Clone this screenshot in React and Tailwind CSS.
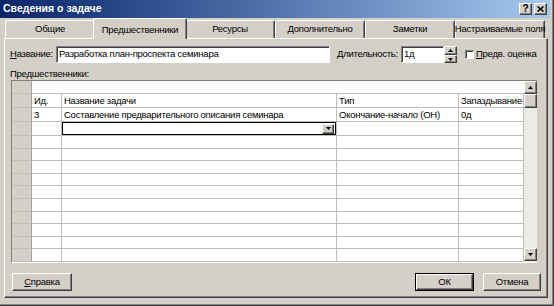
import React from 'react';

const raised = 'border-t border-l border-white border-r border-b border-r-[#404040] border-b-[#404040] shadow-[inset_-1px_-1px_0_#808080] bg-[#d4d0c8]';
const sunken = 'border-t border-l border-[#808080] border-r border-b border-r-white border-b-white shadow-[inset_1px_1px_0_#404040] bg-white';

const Tri = ({ up }) => (
  <svg width="5" height="3" viewBox="0 0 5 3">
    <path d={up ? 'M2.5 0 L5 3 L0 3 Z' : 'M0 0 L5 0 L2.5 3 Z'} fill="#000" />
  </svg>
);

function Tab({ label, active }) {
  if (active) {
    return (
      <div className="relative z-10 -mx-[2px] -mb-[1px] flex h-[21px] w-[94px] items-start justify-center whitespace-nowrap rounded-t-[2px] border-t border-l border-r border-white border-r-[#404040] bg-[#d4d0c8] pt-[4px] shadow-[inset_-1px_0_0_#808080]">
        {label}
      </div>
    );
  }
  return (
    <div className="flex h-[18px] w-[90px] items-center justify-center whitespace-nowrap rounded-t-[2px] border-t border-l border-r border-white border-r-[#404040] shadow-[inset_-1px_0_0_#808080]">
      {label}
    </div>
  );
}

const cols = ['w-[30px]', 'w-[275px]', 'w-[122px]', 'w-[65px]'];

function Row({ cells, edit }) {
  return (
    <div className="flex h-[14px]">
      <div className="w-[20px] shrink-0 border-r border-b border-r-[#a0a0a0] border-b-[#bdbdbd] bg-[#d4d0c8]" />
      {cols.map((w, i) => (
        <div key={i} className={`${w} shrink-0 overflow-hidden whitespace-nowrap border-r border-b border-[#bdbdbd] bg-white pl-[2px] leading-[13px]`}>
          {edit && i === 1 ? (
            <div className="-ml-[3px] -mt-[1px] flex h-[15px] w-[276px] items-center justify-end border-2 border-black pr-[1px]">
              <div className={`${raised} flex h-[10px] w-[12px] items-center justify-center`}>
                <Tri />
              </div>
            </div>
          ) : (
            cells?.[i] ?? ''
          )}
        </div>
      ))}
    </div>
  );
}

export default function App() {
  const empty = Array.from({ length: 10 });
  return (
    <div className="flex h-[306px] w-[554px] flex-col overflow-hidden border-r border-b border-[#404040] bg-[#d4d0c8] font-['Liberation_Sans',Arial,sans-serif] text-[9.5px] tracking-[-0.25px] text-black shadow-[inset_-1px_-1px_0_#808080]">
      {/* Title bar */}
      <div className="mr-[3px] flex h-[18px] shrink-0 items-center bg-linear-to-r from-[#0a246a] to-[#a6caf0] pl-[3px]">
        <span className="text-[10.5px] font-bold tracking-normal text-white">Сведения о задаче</span>
        <div className="ml-auto flex gap-[2px] pr-[3px]">
          <div className={`${raised} flex h-[12px] w-[13px] items-center justify-center text-[10px] font-bold leading-none`}>?</div>
          <div className={`${raised} flex h-[12px] w-[13px] items-center justify-center`}>
            <svg width="7" height="6" viewBox="0 0 7 6">
              <path d="M0.5 0.5 L6.5 5.5 M6.5 0.5 L0.5 5.5" stroke="#000" strokeWidth="1.6" />
            </svg>
          </div>
        </div>
      </div>

      {/* Tabs */}
      <div className="mt-[2px] flex h-[18px] shrink-0 items-end pl-[5px]">
        <Tab label="Общие" />
        <Tab label="Предшественники" active />
        <Tab label="Ресурсы" />
        <Tab label="Дополнительно" />
        <Tab label="Заметки" />
        <Tab label="Настраиваемые поля" />
      </div>

      {/* Panel */}
      <div className="ml-[4px] flex h-[260px] w-[544px] shrink-0 flex-col border-t border-l border-white border-r border-b border-r-[#404040] border-b-[#404040] pl-[5px] pt-[7px] shadow-[inset_-1px_-1px_0_#808080]">
        <div className="flex h-[17px] items-center whitespace-nowrap">
          <div className="w-[46px]"><span className="underline">Н</span>азвание:</div>
          <div className={`${sunken} flex h-[17px] w-[274px] items-center pl-[2px]`}>Разработка план-проспекта семинара</div>
          <div className="ml-[7px] w-[64px]"><span className="underline">Д</span>лительность:</div>
          <div className={`${sunken} flex h-[17px] w-[43px] items-center pl-[2px]`}>1д</div>
          <div className="flex h-[17px] w-[13px] flex-col">
            <div className={`${raised} flex h-[9px] items-center justify-center`}><Tri up /></div>
            <div className={`${raised} flex h-[8px] items-center justify-center`}><Tri /></div>
          </div>
          <div className={`${sunken} ml-[8px] h-[9px] w-[9px]`} />
          <div className="ml-[2px]"><span className="underline">П</span>редв. оценка</div>
        </div>

        <div className="mt-[4px] h-[13px] leading-[13px]">Предшественники:</div>

        {/* Grid */}
        <div className="ml-[1px] flex h-[183px] w-[526px] overflow-hidden border-t border-l border-[#808080] border-b border-b-white">
          <div className="flex w-[512px] flex-col">
            <div className="flex h-[13px] shrink-0">
              <div className="w-[20px] border-r border-b border-r-[#a0a0a0] border-b-[#bdbdbd] bg-[#d4d0c8]" />
              <div className="flex-1 border-b border-[#bdbdbd] bg-white" />
            </div>
            <Row cells={['Ид.', 'Название задачи', 'Тип', 'Запаздывание']} />
            <Row cells={['3', 'Составление предварительного описания семинара', 'Окончание-начало (ОН)', '0д']} />
            <Row edit />
            {empty.map((_, i) => (
              <Row key={i} />
            ))}
          </div>
          <div className="flex w-[13px] flex-col bg-[#ecebe6]">
            <div className={`${raised} flex h-[13px] shrink-0 items-center justify-center`}><Tri up /></div>
            <div className={`${raised} h-[14px] shrink-0`} />
            <div className="flex-1" />
            <div className={`${raised} mb-[1px] flex h-[13px] shrink-0 items-center justify-center`}><Tri /></div>
          </div>
        </div>

        {/* Buttons */}
        <div className="mt-[10px] flex h-[18px] items-center">
          <div className={`${raised} ml-[2px] flex h-[18px] w-[60px] items-center justify-center`}>
            <span><span className="underline">С</span>правка</span>
          </div>
          <div className="ml-auto flex h-[18px] w-[59px] border border-black">
            <div className={`${raised} flex flex-1 items-center justify-center`}>ОК</div>
          </div>
          <div className={`${raised} ml-[9px] mr-[6px] flex h-[18px] w-[58px] items-center justify-center`}>Отмена</div>
        </div>
      </div>
    </div>
  );
}
